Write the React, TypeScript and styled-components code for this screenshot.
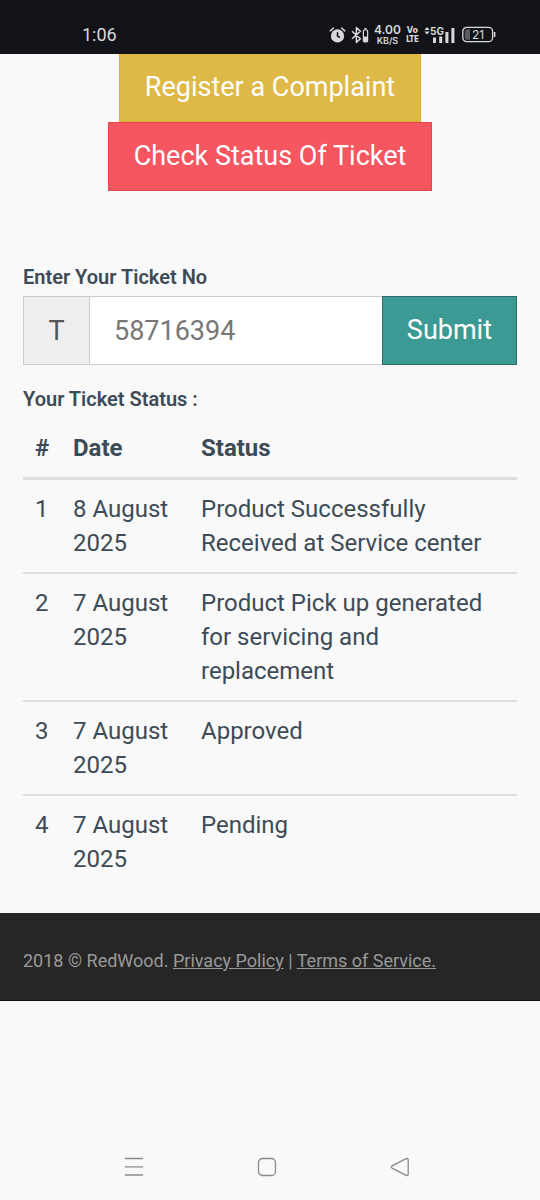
import React from "react";
import styled, { createGlobalStyle } from "styled-components";

const GlobalStyle = createGlobalStyle`
  *, *::before, *::after { box-sizing: border-box; }
  body {
    margin: 0;
    background: #f9f9f9;
    color: #3d4b57;
    font-family: Roboto, "Liberation Sans", sans-serif;
    font-size: 24px;
    line-height: 34px;
  }
  button, input { font-family: inherit; }
`;

const Screen = styled.div`
  display: flex;
  flex-direction: column;
  min-height: 100vh;
`;

const StatusBar = styled.header`
  display: flex;
  align-items: center;
  justify-content: space-between;
  height: 54px;
  padding: 15px 44px 0 82px;
  background: #111319;
  color: #d8d9db;
`;

const Clock = styled.time`
  font-size: 18px;
  line-height: 24px;
`;

const Indicators = styled.div`
  display: flex;
  align-items: center;
  gap: 5px;

  svg { display: block; }
`;

const StackedText = styled.div`
  display: flex;
  flex-direction: column;
  align-items: center;
  font-family: Inter, Roboto, sans-serif;
  font-size: 12px;
  font-weight: 600;
  line-height: 12px;

  small {
    font-size: 9px;
    line-height: 9px;
  }
`;

const NarrowText = styled(StackedText)`
  font-family: "DejaVu Sans Condensed", Roboto, sans-serif;
  font-size: 9px;
  font-weight: 700;
  line-height: 9px;

  small { font-size: 8px; }
`;

const Content = styled.main`
  padding: 0 23px 25px;
`;

const Actions = styled.nav`
  display: flex;
  flex-direction: column;
  align-items: center;
  margin-bottom: 72px;
`;

const tones = {
  amber: { fill: "#deb947", edge: "#d9b02f" },
  red: { fill: "#f5565f", edge: "#e2474f" },
  teal: { fill: "#3b9b94", edge: "#2c6f69" },
};

const Button = styled.button<{ $tone: keyof typeof tones; $flushTop?: boolean }>`
  flex: none;
  margin: 0;
  padding: 16px 25px;
  border: 1px solid ${(p) => tones[p.$tone].edge};
  border-top-width: ${(p) => (p.$flushTop ? 0 : 1)}px;
  border-radius: 0;
  background: ${(p) => tones[p.$tone].fill};
  color: #fff;
  font-size: 27px;
  line-height: 35px;
`;

const Label = styled.label`
  display: block;
  font-size: 20px;
  font-weight: 600;
  line-height: 28px;
  margin-bottom: 5px;
`;

const Heading = styled.h2`
  margin: 20px 0 6px;
  font-size: 20px;
  font-weight: 600;
  line-height: 28px;
`;

const InputGroup = styled.form`
  display: flex;
  height: 69px;
  font-size: 27px;
`;

const Prefix = styled.span`
  display: flex;
  align-items: center;
  justify-content: center;
  width: 66px;
  border: 1px solid #ccc;
  border-right: 0;
  background: #eee;
  color: #555;
`;

const TicketInput = styled.input`
  flex: 1;
  min-width: 0;
  padding: 0 24px;
  border: 1px solid #ccc;
  border-right: 0;
  border-radius: 0;
  background: #fff;
  color: #555;
  font-size: 27px;

  &::placeholder { color: #777; opacity: 1; }
`;

const SubmitButton = styled(Button)`
  padding: 16px 24px;
`;

const Table = styled.table`
  width: 100%;
  border-collapse: separate;
  border-spacing: 0;
  table-layout: fixed;
  text-align: left;

  th, td {
    padding: 12px;
    vertical-align: top;
  }
  th {
    border-bottom: 3px solid #ddd;
    font-weight: 700;
  }
  th:nth-child(1) { width: 38px; padding-right: 0; }
  td:nth-child(1) { padding-right: 0; }
  th:nth-child(2) { width: 128px; }
  tbody tr + tr td { border-top: 2px solid #ddd; }
`;

const Footer = styled.footer`
  padding: 36px 23px 27px;
  border-bottom: 1px solid #111;
  background: #262626;
  color: #999;
  font-size: 18px;
  line-height: 24px;
`;

const FooterLink = styled.a`
  color: inherit;
  text-decoration: underline;
`;

const SystemNav = styled.nav`
  display: grid;
  grid-template-columns: repeat(3, 1fr);
  height: 66px;
  margin-top: auto;
  padding: 0 73px 0 67px;
`;

const NavKey = styled.button`
  display: flex;
  align-items: center;
  justify-content: center;
  padding: 0;
  border: 0;
  background: none;
  color: #8a8a8a;

  svg {
    fill: none;
    stroke: currentColor;
    stroke-width: 1.3;
  }
`;

const AlarmIcon = () => (
  <svg width="17" height="18" viewBox="0 0 18 18" fill="none" stroke="currentColor" aria-hidden="true">
    <circle cx="9" cy="10" r="7" fill="currentColor" stroke="none" />
    <path d="M1.3 4.6 4.7 1.6M16.7 4.6 13.3 1.6" strokeWidth="1.6" strokeLinecap="round" />
    <path d="M9 6v4.2l2.6 1.7" stroke="#111319" strokeWidth="1.6" />
  </svg>
);

const BluetoothIcon = () => (
  <svg width="18" height="18" viewBox="0 0 18 18" fill="none" stroke="currentColor" aria-hidden="true">
    <path d="M1 5.2 9.4 12.8 5.4 16.4V1.6L9.4 5.2 1 12.8" strokeWidth="1.5" strokeLinejoin="round" />
    <rect x="12.4" y="4" width="4.2" height="11.8" rx="1" strokeWidth="1.2" />
    <path d="M13.2 2.8h2.6" strokeWidth="1.4" />
    <path d="M12.4 10.5h4.2v5.3h-4.2z" fill="currentColor" stroke="none" />
  </svg>
);

const SignalIcon = () => (
  <svg width="33" height="18" viewBox="0 0 33 18" fill="currentColor" role="img" aria-label="5G signal">
    <path d="M3 1 5.6 4H.4zM3 8.4 .4 5.4h5.2z" />
    <text x="6" y="8.6" fontFamily="Inter, sans-serif" fontSize="10" fontWeight="700">5G</text>
    <path d="M9 11.4h3V17H9zM15.2 10.4h3V17h-3zM21.4 6h3v11h-3zM27.4 2h3v15h-3z" />
  </svg>
);

const BatteryIcon = () => (
  <svg width="34" height="17" viewBox="0 0 34 17" fill="none" stroke="currentColor" role="img" aria-label="Battery 21 percent">
    <rect x="0.8" y="1.3" width="29.8" height="14.4" rx="4" strokeWidth="1.3" />
    <path d="M5 3.2h3v10.6H5Q2.8 13.8 2.8 11.6V5.4Q2.8 3.2 5 3.2z" fill="#5a5b60" stroke="none" />
    <path d="M32.6 6v5" strokeWidth="1.6" />
    <text x="16" y="12.8" fill="currentColor" stroke="none" textAnchor="middle" fontFamily="Inter, sans-serif" fontSize="12">21</text>
  </svg>
);

const updates = [
  { date: "8 August 2025", status: "Product Successfully Received at Service center" },
  { date: "7 August 2025", status: "Product Pick up generated for servicing and replacement" },
  { date: "7 August 2025", status: "Approved" },
  { date: "7 August 2025", status: "Pending" },
];

export default function App() {
  return (
    <Screen>
      <GlobalStyle />
      <StatusBar>
        <Clock>1:06</Clock>
        <Indicators>
          <AlarmIcon />
          <BluetoothIcon />
          <StackedText>
            4.00<small>KB/S</small>
          </StackedText>
          <NarrowText>
            Vo<small>LTE</small>
          </NarrowText>
          <SignalIcon />
          <BatteryIcon />
        </Indicators>
      </StatusBar>

      <Content>
        <Actions>
          <Button type="button" $tone="amber" $flushTop>Register a Complaint</Button>
          <Button type="button" $tone="red">Check Status Of Ticket</Button>
        </Actions>

        <Label htmlFor="ticket">Enter Your Ticket No</Label>
        <InputGroup onSubmit={(e) => e.preventDefault()}>
          <Prefix>T</Prefix>
          <TicketInput id="ticket" placeholder="58716394" inputMode="numeric" />
          <SubmitButton type="submit" $tone="teal">Submit</SubmitButton>
        </InputGroup>

        <Heading>Your Ticket Status :</Heading>
        <Table>
          <thead>
            <tr>
              <th scope="col">#</th>
              <th scope="col">Date</th>
              <th scope="col">Status</th>
            </tr>
          </thead>
          <tbody>
            {updates.map((u, i) => (
              <tr key={i}>
                <td>{i + 1}</td>
                <td>{u.date}</td>
                <td>{u.status}</td>
              </tr>
            ))}
          </tbody>
        </Table>
      </Content>

      <Footer>
        2018 © RedWood. <FooterLink href="#privacy">Privacy Policy</FooterLink> |{" "}
        <FooterLink href="#terms">Terms of Service.</FooterLink>
      </Footer>

      <SystemNav aria-label="System">
        <NavKey type="button" aria-label="Recent apps">
          <svg width="20" height="20" viewBox="0 0 20 20"><path d="M1 1.5h18M1 9.8h18M1 18h18" /></svg>
        </NavKey>
        <NavKey type="button" aria-label="Home">
          <svg width="20" height="20" viewBox="0 0 20 20"><rect x="1.5" y="1.5" width="17" height="17" rx="4" /></svg>
        </NavKey>
        <NavKey type="button" aria-label="Back">
          <svg width="20" height="20" viewBox="0 0 20 20">
            <path d="M2 8.9 16.2 1.7Q18.2 1 18.2 3v14q0 2-2 1.3L2 11.1Q.6 10 2 8.9z" strokeLinejoin="round" />
          </svg>
        </NavKey>
      </SystemNav>
    </Screen>
  );
}
